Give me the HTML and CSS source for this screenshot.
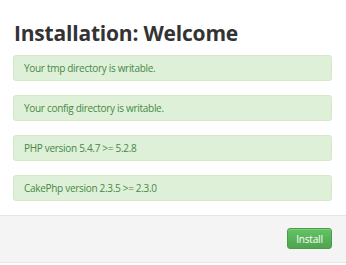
FILE: index.html
```html
<!DOCTYPE html>
<html lang="en">
<head>
    <meta charset="UTF-8">
    <meta name="viewport" content="width=device-width, initial-scale=1.0">
    <title>Installation: Welcome</title>
    <link rel="stylesheet" href="styles.css">
</head>
<body>
    <div class="content">
        <h1>Installation: Welcome</h1>

        <div class="alert alert-success">Your tmp directory is writable.</div>
        <div class="alert alert-success">Your config directory is writable.</div>
        <div class="alert alert-success">PHP version 5.4.7 &gt;= 5.2.8</div>
        <div class="alert alert-success">CakePhp version 2.3.5 &gt;= 2.3.0</div>
    </div>

    <div class="form-actions">
        <button class="btn btn-success">Install</button>
    </div>
</body>
</html>
```

FILE: styles.css
```css
body {
    font-family: "Open Sans", "Noto Sans", sans-serif;
    background: #ffffff;
    color: #333333;
    margin: 0;
    padding: 0;
}

.content {
    padding: 20px 14px 0 13px;
}

h1 {
    margin: 0 0 9px 1px;
    font-size: 21px;
    line-height: 26px;
    font-weight: 700;
    color: #333333;
    letter-spacing: -0.2px;
}

.alert {
    height: 26px;
    box-sizing: border-box;
    margin-bottom: 14px;
    padding: 0 10px;
    border-radius: 3px;
    font-size: 10px;
    line-height: 25px;
    letter-spacing: -0.3px;
}

.alert-success {
    background: #dff0d8;
    border: 1px solid #d6e9c6;
    color: #468847;
}

.form-actions {
    margin-top: 1px;
    height: 48px;
    box-sizing: border-box;
    padding: 12px 14px 0 0;
    background: #f4f4f4;
    border-top: 1px solid #e5e5e5;
    border-bottom: 1px solid #e5e5e5;
    display: flex;
    justify-content: flex-end;
    align-items: flex-start;
}

.btn {
    width: 45px;
    height: 21px;
    padding: 0;
    font-family: inherit;
    font-size: 10px;
    letter-spacing: -0.2px;
    color: #ffffff;
    border-radius: 3px;
    cursor: pointer;
}

.btn-success {
    background: linear-gradient(#62c462, #51a351);
    border: 1px solid #4a9a4a;
    box-shadow: inset 0 1px 0 rgba(255, 255, 255, 0.2);
}
```
